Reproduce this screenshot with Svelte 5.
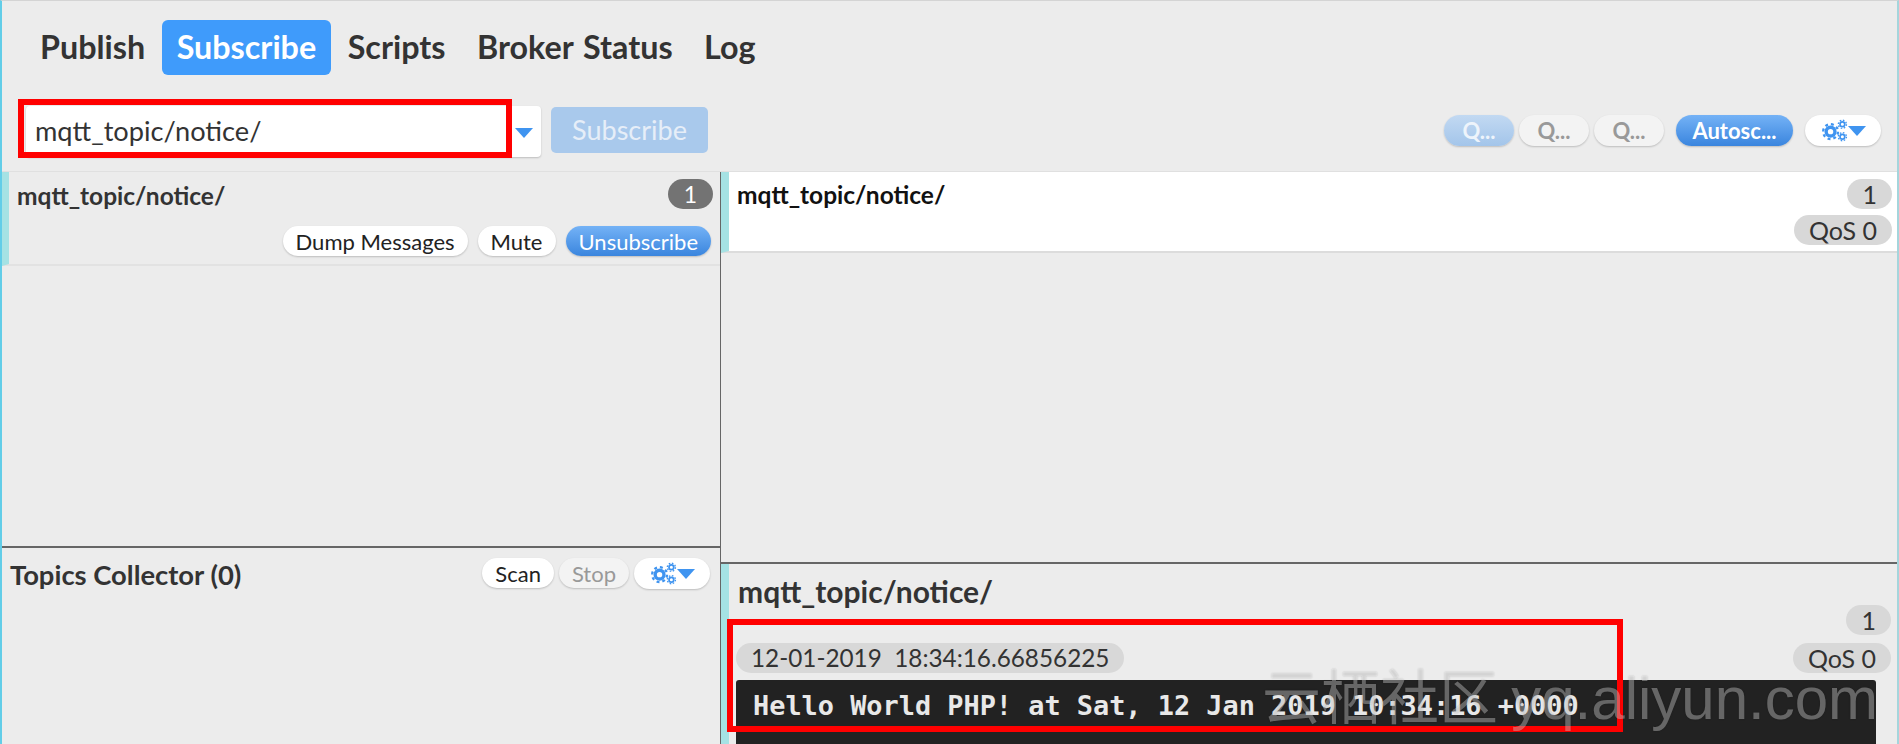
<script>
  const tabs = ["Publish", "Subscribe", "Scripts", "Broker Status", "Log"];
  const topic = "mqtt_topic/notice/";
</script>

{#snippet cogs()}
  <svg class="cogs" viewBox="0 0 24 20" aria-hidden="true">
    <g fill="none" stroke="#3f94f0">
      <circle cx="8.5" cy="11" r="3.9" stroke-width="3" />
      <circle cx="8.5" cy="11" r="6.6" stroke-width="2" stroke-dasharray="2.6 2.6" />
      <circle cx="19" cy="4.5" r="2.1" stroke-width="1.5" />
      <circle cx="19" cy="4.5" r="3.6" stroke-width="1.2" stroke-dasharray="1.4 1.43" />
      <circle cx="19" cy="15.5" r="2.1" stroke-width="1.5" />
      <circle cx="19" cy="15.5" r="3.6" stroke-width="1.2" stroke-dasharray="1.4 1.43" />
    </g>
  </svg>
  <span class="caret"></span>
{/snippet}

<div class="app">
  <nav class="tabs">
    {#each tabs as tab}
      <span class="tab" class:active={tab === "Subscribe"}>{tab}</span>
    {/each}
  </nav>

  <div class="toolbar">
    <div class="combo">
      <span class="combo-text">{topic}</span>
      <span class="combo-arrow"><span class="caret"></span></span>
    </div>
    <span class="subscribe-btn">Subscribe</span>
    <div class="spacer"></div>
    <div class="tools">
      <span class="pill blue faded q">Q...</span>
      <span class="pill disabled q">Q...</span>
      <span class="pill disabled q">Q...</span>
      <span class="pill blue autosc">Autosc...</span>
      <span class="pill cog-btn">{@render cogs()}</span>
    </div>
  </div>

  <div class="panes">
    <div class="left">
      <div class="subs">
        <div class="sub-item">
          <div class="sub-head">
            <span class="sub-name">{topic}</span>
            <span class="count">1</span>
          </div>
          <div class="sub-actions">
            <span class="pill small">Dump Messages</span>
            <span class="pill small">Mute</span>
            <span class="pill small blue">Unsubscribe</span>
          </div>
        </div>
      </div>
      <div class="collector">
        <span class="collector-title">Topics Collector (0)</span>
        <div class="collector-actions">
          <span class="pill small scan">Scan</span>
          <span class="pill small disabled stop">Stop</span>
          <span class="pill cog-btn low">{@render cogs()}</span>
        </div>
      </div>
    </div>

    <div class="right">
      <div class="msgs">
        <div class="msg-row">
          <span class="msg-name">{topic}</span>
          <div class="badges">
            <span class="badge">1</span>
            <span class="badge">QoS 0</span>
          </div>
        </div>
      </div>
      <div class="detail">
        <div class="detail-title">{topic}</div>
        <div class="detail-count"><span class="badge">1</span></div>
        <div class="detail-meta">
          <span class="badge stamp">12-01-2019&nbsp; 18:34:16.66856225</span>
          <span class="badge">QoS 0</span>
        </div>
        <pre class="payload">Hello World PHP! at Sat, 12 Jan 2019 10:34:16 +0000</pre>
      </div>
    </div>
  </div>

  <div class="mark input-mark"></div>
  <div class="mark payload-mark"></div>
  <div class="watermark">云栖社区 <span class="watermark-latin">yq.aliyun.com</span></div>
</div>

<style>
  :global(body) {
    margin: 0;
    background: #ececec;
  }

  .app {
    position: relative;
    height: 744px;
    overflow: hidden;
    box-sizing: border-box;
    display: flex;
    flex-direction: column;
    background: #ececec;
    border-left: 2px solid #62cde8;
    border-right: 2px solid #a5d5dc;
    border-top: 1px solid #d4d4d4;
    color: #333;
    font-family: Lato, sans-serif;
  }

  .tabs {
    display: flex;
    align-items: center;
    gap: 1.5px;
    height: 56px;
    margin-top: 18px;
    padding-left: 23px;
  }

  .tab {
    padding: 0 15px;
    height: 55px;
    line-height: 54px;
    font-size: 32.3px;
    font-weight: 700;
    word-spacing: 2px;
    border-radius: 6px;
  }

  .tab.active {
    background: #3f9bfb;
    color: #fff;
  }

  .toolbar {
    display: flex;
    align-items: flex-start;
    height: 98px;
    padding: 31px 16px 0 24px;
    box-sizing: border-box;
  }

  .combo {
    display: flex;
    width: 515px;
    height: 51px;
    background: #fff;
    border-radius: 4px;
    box-shadow: 0 1px 2px rgba(0, 0, 0, 0.2);
  }

  .combo-text {
    flex: 1;
    padding-left: 9px;
    font-size: 27.2px;
    line-height: 50px;
  }

  .combo-arrow {
    width: 34px;
    display: flex;
    align-items: center;
    justify-content: center;
    padding-top: 2px;
  }

  .caret {
    display: inline-block;
    width: 0;
    height: 0;
    border-left: 9px solid transparent;
    border-right: 9px solid transparent;
    border-top: 10px solid #3f94f0;
  }

  .subscribe-btn {
    margin-left: 10px;
    width: 157px;
    height: 46px;
    margin-top: 1px;
    text-align: center;
    line-height: 46px;
    font-size: 27px;
    color: #e6eef8;
    background: #a9c9ec;
    border-radius: 5px;
  }

  .spacer {
    flex: 1;
  }

  .tools {
    display: flex;
    gap: 5px;
    margin-top: 9px;
  }

  .pill {
    display: inline-flex;
    align-items: center;
    justify-content: center;
    box-sizing: border-box;
    height: 31px;
    border-radius: 16px;
    background: #fff;
    color: #222;
    font-size: 22px;
    font-weight: 700;
    box-shadow: 0 1px 2px rgba(0, 0, 0, 0.2);
    white-space: nowrap;
  }

  .pill.blue {
    color: #fff;
    background: linear-gradient(#74b2f6, #3a85de);
  }

  .pill.blue.faded {
    background: linear-gradient(#c2d9f2, #a3c5ea);
    color: #eef4fb;
  }

  .pill.disabled {
    background: #f3f3f3;
    color: #999;
  }

  .q {
    width: 70px;
  }

  .autosc {
    width: 117px;
    margin-left: 7px;
  }

  .cog-btn {
    width: 76px;
    margin-left: 7px;
    gap: 0;
  }

  .cog-btn.low {
    margin-left: 0;
  }

  .cogs {
    width: 27px;
    height: 23px;
  }

  .panes {
    flex: 1;
    min-height: 0;
    display: grid;
    grid-template-columns: 719px 1fr;
    margin-top: -2px;
    border-top: 1px solid #e0e0e0;
  }

  .left {
    display: flex;
    flex-direction: column;
    border-right: 1px solid #666;
  }

  .subs {
    height: 376px;
    border-bottom: 2px solid #666;
    box-sizing: border-box;
  }

  .sub-item {
    height: 94px;
    box-sizing: border-box;
    border-left: 7px solid #a5e2e4;
    border-bottom: 2px solid #e2e2e2;
    padding: 7px 7px 0 8px;
  }

  .sub-head {
    display: flex;
    justify-content: space-between;
    align-items: center;
    height: 30px;
  }

  .sub-name {
    font-size: 24.5px;
    font-weight: 700;
    margin-top: 2px;
  }

  .count {
    width: 45px;
    height: 30px;
    border-radius: 15px;
    background: #737373;
    color: #fff;
    text-align: center;
    font-size: 23px;
    line-height: 30px;
  }

  .sub-actions {
    display: flex;
    justify-content: flex-end;
    gap: 10px;
    margin-top: 17px;
    padding-right: 2px;
  }

  .small {
    padding: 0 13px;
    font-size: 22px;
    font-weight: 400;
    height: 30px;
  }

  .collector {
    flex: 1;
    display: flex;
    justify-content: space-between;
    align-items: flex-start;
    padding: 11px 10px 0 8px;
  }

  .collector-title {
    font-size: 27.4px;
    font-weight: 700;
    line-height: 32px;
  }

  .collector-actions {
    display: flex;
    gap: 5px;
    margin-top: -1px;
  }

  .right {
    display: flex;
    flex-direction: column;
    min-width: 0;
  }

  .msgs {
    height: 392px;
    border-bottom: 2px solid #666;
    box-sizing: border-box;
  }

  .msg-row {
    display: flex;
    justify-content: space-between;
    height: 81px;
    box-sizing: border-box;
    background: #fff;
    border-left: 8px solid #a5e2e4;
    border-bottom: 2px solid #dcdcdc;
    padding: 7px 5px 0 8px;
  }

  .msg-name {
    font-size: 24.5px;
    font-weight: 700;
    color: #111;
    line-height: 30px;
    margin-top: 1px;
  }

  .badges {
    display: flex;
    flex-direction: column;
    align-items: flex-end;
    gap: 6px;
  }

  .badge {
    display: inline-block;
    height: 30px;
    min-width: 44px;
    box-sizing: border-box;
    padding: 0 15px;
    border-radius: 15px;
    background: #d8d8d8;
    text-align: center;
    font-size: 25px;
    line-height: 30px;
    white-space: nowrap;
  }

  .detail {
    flex: 1;
    min-height: 0;
    border-left: 8px solid #a5e2e4;
    padding-left: 7px;
    padding-right: 6px;
  }

  .detail-title {
    font-size: 30px;
    font-weight: 700;
    line-height: 34px;
    margin-top: 10px;
    margin-left: 2px;
  }

  .detail-count {
    display: flex;
    justify-content: flex-end;
    margin-top: -3px;
  }

  .detail-meta {
    display: flex;
    justify-content: space-between;
    margin-top: 8px;
  }

  .stamp {
    font-size: 24.3px;
  }

  .payload {
    margin: 7px 15px 0 0;
    height: 70px;
    box-sizing: border-box;
    padding: 12px 17px;
    background: #222;
    color: #e8e8e8;
    border-radius: 3px;
    font-family: "DejaVu Sans Mono", monospace;
    font-size: 26.9px;
    font-weight: 700;
    line-height: 28px;
  }

  .mark {
    position: absolute;
    box-sizing: border-box;
    border: 6px solid #f00;
    pointer-events: none;
  }

  .input-mark {
    left: 16px;
    top: 98px;
    width: 494px;
    height: 59px;
  }

  .payload-mark {
    left: 725px;
    top: 618px;
    width: 896px;
    height: 113px;
  }

  .watermark {
    position: absolute;
    left: 1260px;
    top: 653px;
    font-family: "Noto Sans CJK SC", sans-serif;
    font-size: 59px;
    line-height: 80px;
    color: rgba(255, 255, 255, 0.33);
    text-shadow: 0 0 2px rgba(0, 0, 0, 0.2);
    white-space: nowrap;
    pointer-events: none;
  }

  .watermark-latin {
    font-family: "Liberation Sans", sans-serif;
    font-size: 60px;
  }
</style>
